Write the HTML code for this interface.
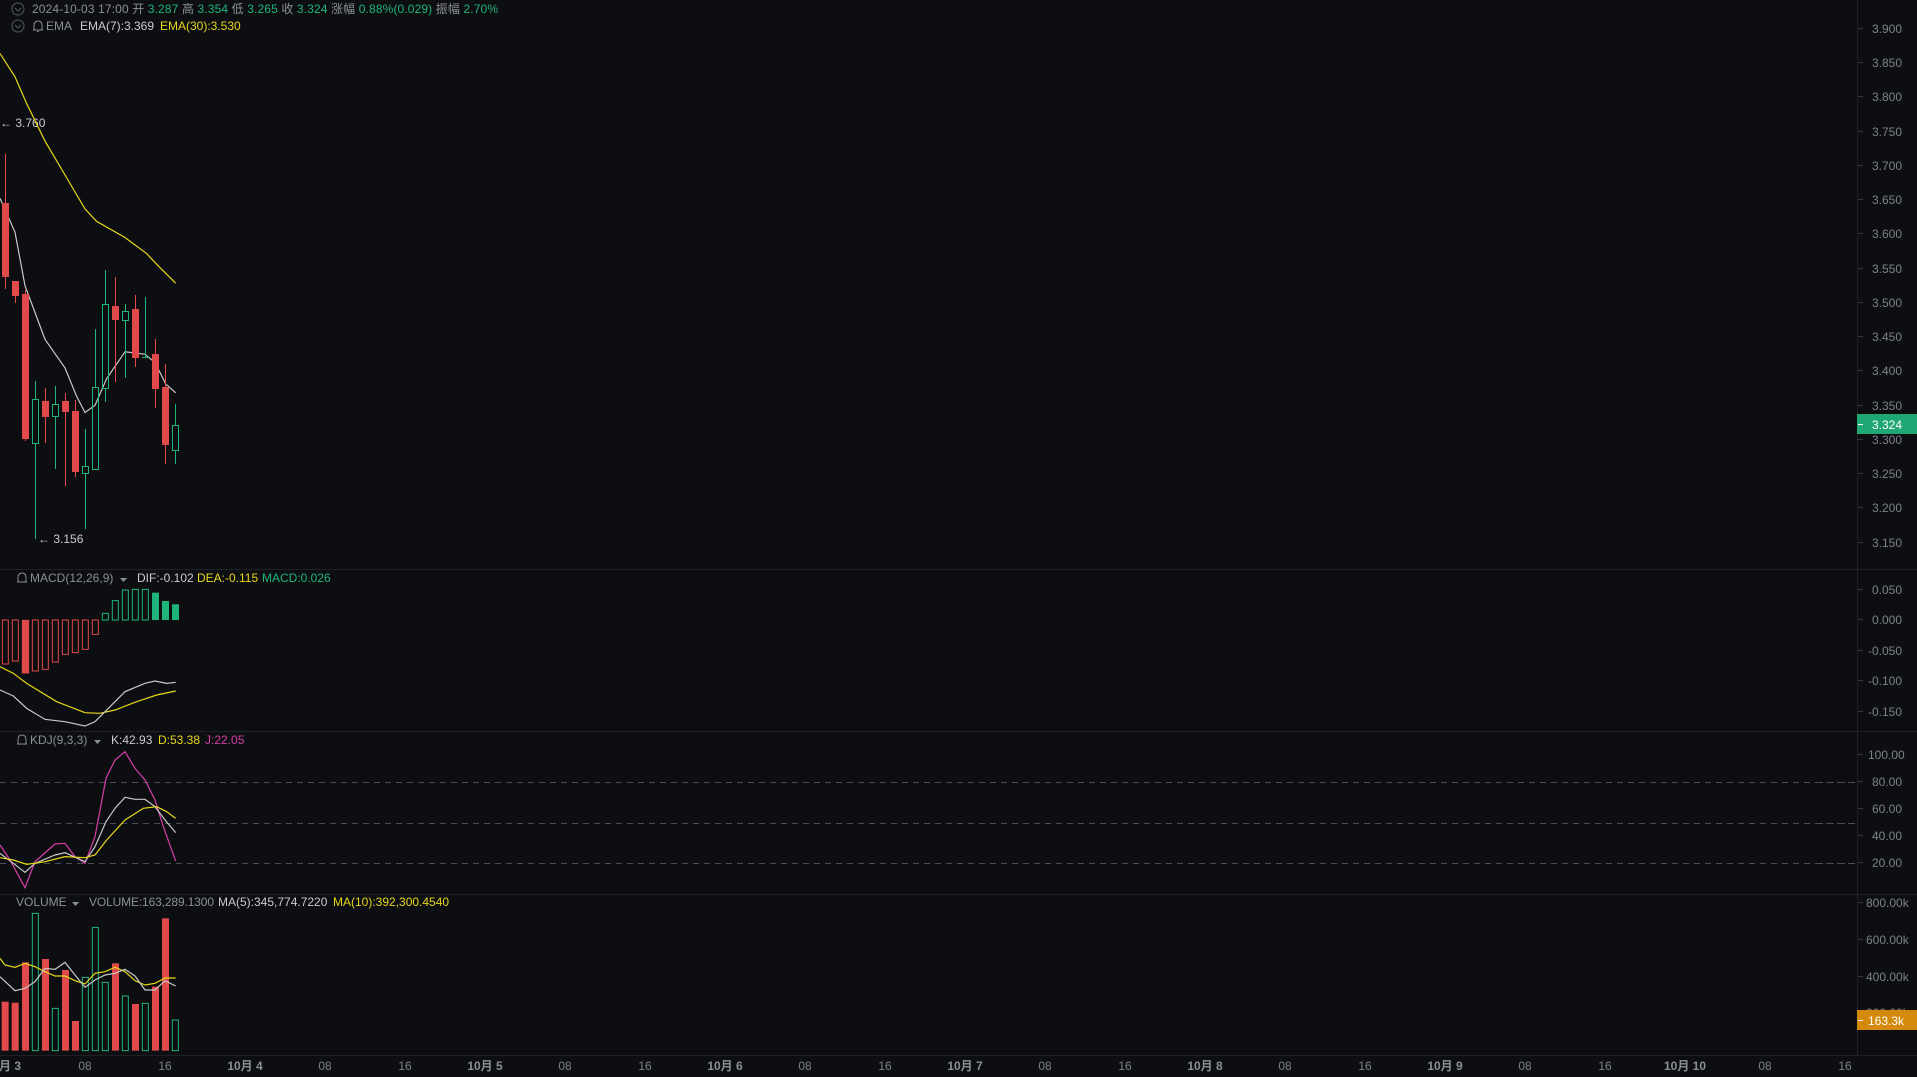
<!DOCTYPE html>
<html><head><meta charset="utf-8"><style>
html,body{margin:0;padding:0;background:#0d0e11;width:1917px;height:1077px;overflow:hidden}
svg{display:block}
text{font-family:"Liberation Sans","Noto Sans CJK SC",sans-serif}
</style></head><body>
<svg width="1917" height="1077" viewBox="0 0 1917 1077" xmlns="http://www.w3.org/2000/svg">
<rect width="1917" height="1077" fill="#0d0e11"/>
<g stroke="#1f2127" stroke-width="1">
<line x1="0" y1="569.5" x2="1917" y2="569.5"/>
<line x1="0" y1="731.5" x2="1917" y2="731.5"/>
<line x1="0" y1="894.5" x2="1917" y2="894.5"/>
<line x1="0" y1="1055.5" x2="1917" y2="1055.5"/>
<line x1="1857.5" y1="0" x2="1857.5" y2="1055"/>
</g>
<g stroke="#4a4d55" stroke-width="1" stroke-dasharray="6,5">
<line x1="0" y1="782.5" x2="1857" y2="782.5"/>
<line x1="0" y1="823.5" x2="1857" y2="823.5"/>
<line x1="0" y1="863.5" x2="1857" y2="863.5"/>
</g>

<g font-size="12">
<circle cx="18" cy="9" r="6" fill="none" stroke="#555962"/><path d="M15 8 L18 11 L21 8" fill="none" stroke="#555962"/>
<text x="32" y="13" fill="#8b8f98" textLength="466" lengthAdjust="spacing">2024-10-03 17:00 <tspan>开 </tspan><tspan fill="#1fb57a">3.287</tspan> 高 <tspan fill="#1fb57a">3.354</tspan> 低 <tspan fill="#1fb57a">3.265</tspan> 收 <tspan fill="#1fb57a">3.324</tspan> 涨幅 <tspan fill="#1fb57a">0.88%(0.029)</tspan> 振幅 <tspan fill="#1fb57a">2.70%</tspan></text>
<circle cx="18" cy="26" r="6" fill="none" stroke="#555962"/><path d="M15 25 L18 28 L21 25" fill="none" stroke="#555962"/>
<path d="M34 30 L34 26 Q34 21 38 21 Q42 21 42 26 L42 30 Z M33 30 L43 30 M37 31.5 L39 31.5" fill="none" stroke="#8b8f98"/>
<text x="46" y="30" fill="#8b8f98">EMA</text>
<text x="80" y="30" fill="#c9cbd0">EMA(7):3.369</text>
<text x="160" y="30" fill="#e8d81a">EMA(30):3.530</text>

<path d="M18 582 L18 578 Q18 573 22 573 Q26 573 26 578 L26 582 Z M17 582 L27 582" fill="none" stroke="#8b8f98"/>
<text x="30" y="582" fill="#8b8f98">MACD(12,26,9)</text>
<path d="M120 578 L127 578 L123.5 582 Z" fill="#8b8f98"/>
<text x="137" y="582" fill="#c9cbd0">DIF:-0.102</text>
<text x="197" y="582" fill="#e8d81a">DEA:-0.115</text>
<text x="262" y="582" fill="#1fb57a">MACD:0.026</text>

<path d="M18 744 L18 740 Q18 735 22 735 Q26 735 26 740 L26 744 Z M17 744 L27 744" fill="none" stroke="#8b8f98"/>
<text x="30" y="744" fill="#8b8f98">KDJ(9,3,3)</text>
<path d="M94 740 L101 740 L97.5 744 Z" fill="#8b8f98"/>
<text x="111" y="744" fill="#c9cbd0">K:42.93</text>
<text x="158" y="744" fill="#e8d81a">D:53.38</text>
<text x="205" y="744" fill="#d63ea8">J:22.05</text>

<text x="16" y="906" fill="#8b8f98">VOLUME</text>
<path d="M72 902 L79 902 L75.5 906 Z" fill="#8b8f98"/>
<text x="89" y="906" fill="#8b8f98" textLength="125" lengthAdjust="spacing">VOLUME:163,289.1300</text>
<text x="218" y="906" fill="#c9cbd0">MA(5):345,774.7220</text>
<text x="333" y="906" fill="#e8d81a">MA(10):392,300.4540</text>

<text x="0" y="127" fill="#c9cbd0">← 3.760</text>
<text x="38" y="543" fill="#c9cbd0">← 3.156</text>
</g>

<g transform="scale(0.33333,0.35714)" fill="none" stroke-width="1.2">
<polyline vector-effect="non-scaling-stroke" stroke="#e8d81a" points="0,150 45,215 80,290 135,395 195,490 255,585 290,620 375,665 440,710 470,740 527,793"/>
<polyline vector-effect="non-scaling-stroke" stroke="#c8c8c8" points="0,555 45,650 75,800 135,950 195,1030 230,1110 255,1155 285,1135 320,1060 375,985 435,992 465,1015 497,1075 527,1100"/>
</g>
<g stroke-width="1">
<g fill="#e04a4a" stroke="#e04a4a">
<line x1="5.5" y1="154" x2="5.5" y2="289"/><rect x="2" y="203" width="7" height="74" stroke="none"/>
<line x1="15.5" y1="281" x2="15.5" y2="303"/><rect x="12" y="281" width="7" height="15" stroke="none"/>
<line x1="25.5" y1="290" x2="25.5" y2="441"/><rect x="22" y="294" width="7" height="145" stroke="none"/>
<line x1="45.5" y1="388" x2="45.5" y2="443"/><rect x="42" y="401" width="7" height="16" stroke="none"/>
<line x1="65.5" y1="393" x2="65.5" y2="486"/><rect x="62" y="401" width="7" height="11" stroke="none"/>
<line x1="75.5" y1="400" x2="75.5" y2="477"/><rect x="72" y="411" width="7" height="61" stroke="none"/>
<line x1="115.5" y1="277" x2="115.5" y2="382"/><rect x="112" y="306" width="7" height="14" stroke="none"/>
<line x1="135.5" y1="295" x2="135.5" y2="367"/><rect x="132" y="309" width="7" height="49" stroke="none"/>
<line x1="155.5" y1="339" x2="155.5" y2="408"/><rect x="152" y="354" width="7" height="35" stroke="none"/>
<line x1="165.5" y1="364" x2="165.5" y2="464"/><rect x="162" y="387" width="7" height="58" stroke="none"/>
</g>
<g fill="none" stroke="#1fb57a">
<line x1="35.5" y1="381" x2="35.5" y2="399"/><line x1="35.5" y1="444" x2="35.5" y2="539"/><rect x="32.5" y="399.5" width="6" height="44"/>
<line x1="55.5" y1="386" x2="55.5" y2="404"/><line x1="55.5" y1="417" x2="55.5" y2="469"/><rect x="52.5" y="404.5" width="6" height="12"/>
<line x1="85.5" y1="429" x2="85.5" y2="466"/><line x1="85.5" y1="474" x2="85.5" y2="529"/><rect x="82.5" y="466.5" width="6" height="7"/>
<line x1="95.5" y1="329" x2="95.5" y2="387"/><rect x="92.5" y="387.5" width="6" height="82"/>
<line x1="105.5" y1="270" x2="105.5" y2="304"/><line x1="105.5" y1="389" x2="105.5" y2="402"/><rect x="102.5" y="304.5" width="6" height="84"/>
<line x1="125.5" y1="304" x2="125.5" y2="311"/><line x1="125.5" y1="321" x2="125.5" y2="378"/><rect x="122.5" y="311.5" width="6" height="9"/>
<line x1="145.5" y1="297" x2="145.5" y2="357"/><line x1="142" y1="357.5" x2="149" y2="357.5"/>
<line x1="175.5" y1="404" x2="175.5" y2="425"/><line x1="175.5" y1="451" x2="175.5" y2="464"/><rect x="172.5" y="425.5" width="6" height="25"/>
</g>
</g>

<g transform="translate(0,560) scale(0.33333,0.33333)">
<g fill="none" stroke="#e04a4a" stroke-width="1">
<rect vector-effect="non-scaling-stroke" x="7" y="180" width="18" height="132"/>
<rect vector-effect="non-scaling-stroke" x="37" y="180" width="18" height="123"/>
<rect x="66" y="180" width="21" height="160" fill="#e04a4a"/>
<rect vector-effect="non-scaling-stroke" x="97" y="180" width="18" height="153"/>
<rect vector-effect="non-scaling-stroke" x="127" y="180" width="18" height="148"/>
<rect vector-effect="non-scaling-stroke" x="157" y="180" width="18" height="126"/>
<rect vector-effect="non-scaling-stroke" x="187" y="180" width="18" height="103"/>
<rect vector-effect="non-scaling-stroke" x="217" y="180" width="18" height="98"/>
<rect vector-effect="non-scaling-stroke" x="247" y="180" width="18" height="88"/>
<rect vector-effect="non-scaling-stroke" x="277" y="180" width="18" height="43"/>
</g>
<g fill="none" stroke="#1fb57a">
<rect vector-effect="non-scaling-stroke" x="307" y="160" width="18" height="20"/>
<rect vector-effect="non-scaling-stroke" x="337" y="122" width="18" height="58"/>
<rect vector-effect="non-scaling-stroke" x="367" y="90" width="18" height="90"/>
<rect vector-effect="non-scaling-stroke" x="397" y="88" width="18" height="92"/>
<rect vector-effect="non-scaling-stroke" x="427" y="88" width="18" height="92"/>
<rect x="456" y="98" width="21" height="82" fill="#1fb57a" stroke="none"/>
<rect x="486" y="123" width="21" height="57" fill="#1fb57a" stroke="none"/>
<rect x="516" y="133" width="21" height="47" fill="#1fb57a" stroke="none"/>
</g>
<polyline vector-effect="non-scaling-stroke" fill="none" stroke="#e8d81a" stroke-width="1.2" points="0,320 40,340 80,370 170,425 255,458 300,460 345,450 410,425 470,405 527,393"/>
<polyline vector-effect="non-scaling-stroke" fill="none" stroke="#c8c8c8" stroke-width="1.2" points="0,390 40,408 80,445 135,478 195,485 255,498 285,485 315,455 375,395 435,370 465,363 500,370 527,367"/>
<polyline vector-effect="non-scaling-stroke" fill="none" stroke="#d63ea8" stroke-width="1.2" points="0,855 30,900 75,983 105,905 165,852 195,850 225,890 255,910 285,830 318,655 345,600 375,575 405,625 435,660 465,720 490,800 527,903"/>
<polyline vector-effect="non-scaling-stroke" fill="none" stroke="#c8c8c8" stroke-width="1.2" points="0,880 40,910 75,937 105,910 165,885 195,878 255,905 285,860 318,785 345,745 375,712 405,718 435,718 465,740 495,780 527,818"/>
<polyline vector-effect="non-scaling-stroke" fill="none" stroke="#e8d81a" stroke-width="1.2" points="0,893 40,900 80,913 135,905 195,890 255,893 285,885 320,840 375,780 430,745 470,740 500,755 527,775"/>
<g fill="#e04a4a">
<rect x="5" y="1325" width="21" height="147"/><rect x="35" y="1328" width="21" height="144"/>
<rect x="66" y="1207" width="21" height="265"/><rect x="126" y="1197" width="21" height="275"/>
<rect x="186" y="1230" width="21" height="242"/><rect x="216" y="1383" width="21" height="89"/>
<rect x="336" y="1210" width="21" height="262"/><rect x="396" y="1332" width="21" height="140"/>
<rect x="456" y="1280" width="21" height="192"/><rect x="486" y="1075" width="21" height="397"/>
</g>
<g fill="none" stroke="#1fb57a">
<rect vector-effect="non-scaling-stroke" x="97" y="1060" width="18" height="412"/>
<rect vector-effect="non-scaling-stroke" x="157" y="1345" width="18" height="127"/>
<rect vector-effect="non-scaling-stroke" x="247" y="1252" width="18" height="220"/>
<rect vector-effect="non-scaling-stroke" x="277" y="1102" width="18" height="370"/>
<rect vector-effect="non-scaling-stroke" x="307" y="1267" width="18" height="205"/>
<rect vector-effect="non-scaling-stroke" x="367" y="1308" width="18" height="164"/>
<rect vector-effect="non-scaling-stroke" x="427" y="1330" width="18" height="142"/>
<rect vector-effect="non-scaling-stroke" x="517" y="1380" width="18" height="92"/>
</g>
<polyline vector-effect="non-scaling-stroke" fill="none" stroke="#e8d81a" stroke-width="1.2" points="0,1195 15,1215 45,1222 75,1210 105,1220 135,1235 165,1248 195,1248 225,1262 255,1272 285,1240 315,1235 345,1222 375,1235 405,1262 435,1275 465,1270 495,1254 527,1254"/>
<polyline vector-effect="non-scaling-stroke" fill="none" stroke="#c8c8c8" stroke-width="1.2" points="0,1250 45,1292 75,1285 105,1265 135,1225 165,1228 195,1207 225,1245 255,1282 285,1260 315,1245 345,1240 375,1228 405,1248 435,1290 465,1290 495,1262 527,1278"/>
</g>

<!-- axis ticks -->
<g stroke="#34373e">
<path d="M1858 28.5h5M1858 62.5h5M1858 96.5h5M1858 131.5h5M1858 165.5h5M1858 199.5h5M1858 233.5h5M1858 268.5h5M1858 302.5h5M1858 336.5h5M1858 370.5h5M1858 405.5h5M1858 439.5h5M1858 473.5h5M1858 507.5h5M1858 542.5h5M1858 589.5h5M1858 619.5h5M1858 650.5h5M1858 680.5h5M1858 711.5h5M1858 754.5h5M1858 781.5h5M1858 808.5h5M1858 835.5h5M1858 862.5h5M1858 902.5h5M1858 939.5h5M1858 976.5h5M1858 1012.5h5"/>
</g>
<g stroke="#4a4d55" stroke-dasharray="6,5"><path d="M1817 782.5h38M1817 823.5h38M1817 863.5h38"/></g>
<g font-size="12" fill="#7d818b">
<text x="1872" y="33">3.900</text><text x="1872" y="67">3.850</text><text x="1872" y="101">3.800</text>
<text x="1872" y="136">3.750</text><text x="1872" y="170">3.700</text><text x="1872" y="204">3.650</text>
<text x="1872" y="238">3.600</text><text x="1872" y="273">3.550</text><text x="1872" y="307">3.500</text>
<text x="1872" y="341">3.450</text><text x="1872" y="375">3.400</text><text x="1872" y="410">3.350</text>
<text x="1872" y="444">3.300</text><text x="1872" y="478">3.250</text><text x="1872" y="512">3.200</text>
<text x="1872" y="547">3.150</text>
<text x="1872" y="594">0.050</text><text x="1872" y="624">0.000</text><text x="1868" y="655">-0.050</text>
<text x="1868" y="685">-0.100</text><text x="1868" y="716">-0.150</text>
<text x="1868" y="759">100.00</text><text x="1872" y="786">80.00</text><text x="1872" y="813">60.00</text>
<text x="1872" y="840">40.00</text><text x="1872" y="867">20.00</text>
<text x="1866" y="907">800.00k</text><text x="1866" y="944">600.00k</text><text x="1866" y="981">400.00k</text>
<text x="1866" y="1017">200.00k</text>
</g>
<rect x="1857" y="414" width="60" height="20" fill="#1fa874"/>
<line x1="1858" y1="424.5" x2="1863" y2="424.5" stroke="#fff"/>
<text x="1872" y="429" font-size="12" fill="#ffffff">3.324</text>
<rect x="1857" y="1010" width="60" height="20" fill="#d4890a"/>
<line x1="1858" y1="1020.5" x2="1863" y2="1020.5" stroke="#fff"/>
<text x="1868" y="1025" font-size="12" fill="#ffffff">163.3k</text>

<g font-size="12" fill="#7d818b" text-anchor="middle">
<text x="10" y="1070" font-weight="bold" fill="#8b8f98">月 3</text>
<text x="85" y="1070">08</text><text x="165" y="1070">16</text>
<text x="245" y="1070" font-weight="bold" fill="#8b8f98">10月 4</text><text x="325" y="1070">08</text><text x="405" y="1070">16</text>
<text x="485" y="1070" font-weight="bold" fill="#8b8f98">10月 5</text><text x="565" y="1070">08</text><text x="645" y="1070">16</text>
<text x="725" y="1070" font-weight="bold" fill="#8b8f98">10月 6</text><text x="805" y="1070">08</text><text x="885" y="1070">16</text>
<text x="965" y="1070" font-weight="bold" fill="#8b8f98">10月 7</text><text x="1045" y="1070">08</text><text x="1125" y="1070">16</text>
<text x="1205" y="1070" font-weight="bold" fill="#8b8f98">10月 8</text><text x="1285" y="1070">08</text><text x="1365" y="1070">16</text>
<text x="1445" y="1070" font-weight="bold" fill="#8b8f98">10月 9</text><text x="1525" y="1070">08</text><text x="1605" y="1070">16</text>
<text x="1685" y="1070" font-weight="bold" fill="#8b8f98">10月 10</text><text x="1765" y="1070">08</text><text x="1845" y="1070">16</text>
</g>
</svg>
</body></html>
